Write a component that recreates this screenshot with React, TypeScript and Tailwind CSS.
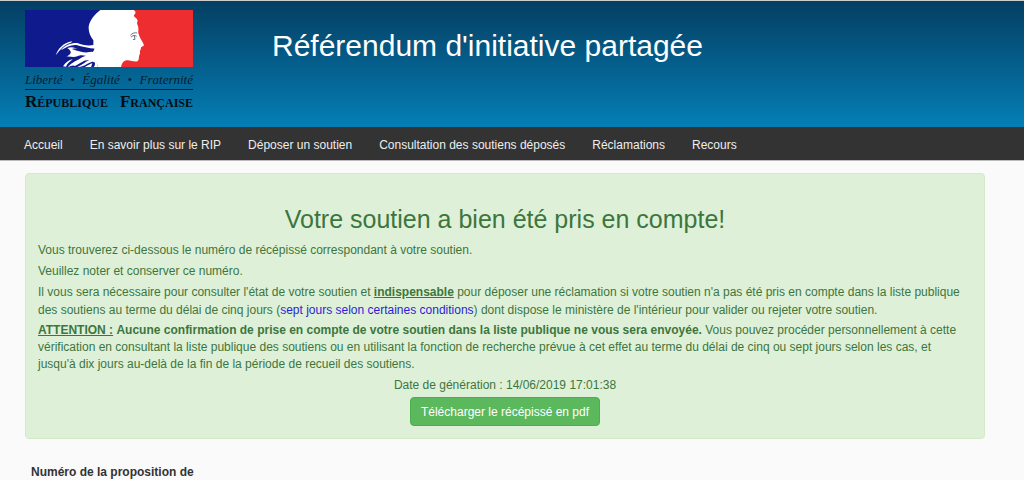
const navItems = [
  { label: 'Accueil', href: '#accueil' },
  { label: 'En savoir plus sur le RIP', href: '#en-savoir-plus' },
  { label: 'Déposer un soutien', href: '#deposer' },
  { label: 'Consultation des soutiens déposés', href: '#consultation' },
  { label: 'Réclamations', href: '#reclamations' },
  { label: 'Recours', href: '#recours' },
];

function Logo() {
  return (
    <a href="#accueil" className="block w-[168px] shrink-0 text-[#06202e]">
      <svg viewBox="75 30 504 172" className="block w-full" aria-hidden="true">
        <rect x="75" y="30" width="260" height="172" fill="#0f1b8c" />
        <rect x="335" y="30" width="244" height="172" fill="#ee2d30" />
        {/* profil de Marianne */}
        <path
          d="M301 30 C284 43 269 61 266 80 C265 96 271 110 280 121 C281 129 278 135 283 139 C286 150 276 160 268 166 C278 171 289 181 294 202 L363 202 C365 191 369 183 380 181 C392 180 403 187 412 184 C419 181 415 170 419 163 C422 158 418 155 421 151 C424 147 421 144 424 141 C428 139 433 138 431 133 C427 124 420 115 417 105 C413 98 416 91 415 83 C414 74 408 71 413 64 C413 57 407 55 402 49 C400 44 409 42 406 35 L402 30 Z"
          fill="#fff"
        />
        {/* mèches */}
        <path d="M167 166 C174 148 187 129 217 124 L213 128 C194 132 181 148 167 166 Z" fill="#fff" />
        <path d="M183 151 C194 135 214 128 232 129 C248 135 265 139 284 134 L288 146 C266 146 246 139 229 135 C211 134 199 141 183 151 Z" fill="#fff" />
        <path d="M202 144 C215 138 229 144 240 151 C252 155 261 154 277 155 C284 158 281 167 272 169 C254 170 249 161 232 169 C221 173 213 169 199 170 C210 164 221 157 202 144 Z" fill="#fff" />
        <path d="M216 147 C232 142 249 153 276 153 C262 161 245 157 216 147 Z" fill="#0f1b8c" />
        <path d="M189 199 C197 187 207 180 218 178 C212 184 202 189 198 200 Z" fill="#fff" />
        <path d="M203 202 C215 187 234 180 248 171 C261 165 276 168 286 172 L294 202 L281 202 C288 192 286 184 276 185 C260 190 250 202 232 201 C246 195 256 185 268 180 C249 180 241 191 225 198 C219 194 211 198 203 202 Z" fill="#fff" />
        <path d="M253 202 C262 196 270 192 277 190 L273 202 Z" fill="#fff" />
        <path d="M391 106 C397 99 405 97 411 99 M393 111 C400 105 405 106 410 109 M403 106 L405 118 L399 119" fill="none" stroke="#6b7175" strokeWidth="3" />
      </svg>
      <span className="mt-[5px] flex justify-between border-b border-current pb-[2px] font-['Liberation_Serif',serif] text-[13px] leading-[15px] whitespace-nowrap italic">
        <span>Liberté</span>
        <span>•</span>
        <span>Égalité</span>
        <span>•</span>
        <span>Fraternité</span>
      </span>
      <span className="mt-[3px] flex justify-between font-['Liberation_Serif',serif] text-[17px] leading-[18px] font-bold whitespace-nowrap text-[#020c14] [font-variant-caps:small-caps]">
        <span>République</span>
        <span>Française</span>
      </span>
    </a>
  );
}

export default function App() {
  return (
    <div className="min-h-screen bg-[#fafafa] font-['Liberation_Sans',Arial,sans-serif] text-[12px] leading-[18px] text-[#333]">
      <header className="flex min-h-[127px] items-start border-t border-[#ccc] bg-linear-to-b from-[#043f63] to-[#047fb6] pt-[9px] pl-[25px]">
        <Logo />
        <h1 className="ml-[79px] pt-[18px] text-[30px] leading-[36px] text-white">
          Référendum d'initiative partagée
        </h1>
      </header>

      <nav className="flex flex-wrap gap-x-[27px] border-b border-[#bbb] bg-[#333] px-6 pt-[9px] pb-[6px]">
        {navItems.map((item) => (
          <a key={item.href} href={item.href} className="text-[#eee] hover:text-white">
            {item.label}
          </a>
        ))}
      </nav>

      <main className="pt-3 pr-[39px] pb-4 pl-[25px]">
        <section className="flex flex-col gap-[3px] rounded-sm border border-[#d6e9c6] bg-[#dff0d8] px-3 pt-[26px] pb-3 text-[#3c763d]">
          <h2 className="text-center text-[25px] leading-[38px]">Votre soutien a bien été pris en compte!</h2>
          <p>Vous trouverez ci-dessous le numéro de récépissé correspondant à votre soutien.</p>
          <p>Veuillez noter et conserver ce numéro.</p>
          <p>
            Il vous sera nécessaire pour consulter l'état de votre soutien et{' '}
            <strong className="underline">indispensable</strong> pour déposer une réclamation si votre
            soutien n'a pas été pris en compte dans la liste publique des soutiens au terme du délai de
            cinq jours (
            <a href="#conditions" className="text-[#2a1fd6]">
              sept jours selon certaines conditions
            </a>
            ) dont dispose le ministère de l'intérieur pour valider ou rejeter votre soutien.
          </p>
          <p className="pr-1 leading-[17px]">
            <strong className="underline">ATTENTION :</strong>{' '}
            <strong>
              Aucune confirmation de prise en compte de votre soutien dans la liste publique ne vous
              sera envoyée.
            </strong>{' '}
            Vous pouvez procéder personnellement à cette vérification en consultant la liste publique
            des soutiens ou en utilisant la fonction de recherche prévue à cet effet au terme du délai
            de cinq ou sept jours selon les cas, et jusqu'à dix jours au-delà de la fin de la période de
            recueil des soutiens.
          </p>
          <p className="text-center">Date de génération : 14/06/2019 17:01:38</p>
          <button
            type="button"
            className="self-center rounded-sm border border-[#4cae4c] bg-[#5cb85c] px-[10px] pt-[5px] pb-[4px] text-white"
          >
            Télécharger le récépissé en pdf
          </button>
        </section>

        <dl className="mt-6 px-[6px]">
          <dt className="w-[190px] font-bold">Numéro de la proposition de</dt>
        </dl>
      </main>
    </div>
  );
}
